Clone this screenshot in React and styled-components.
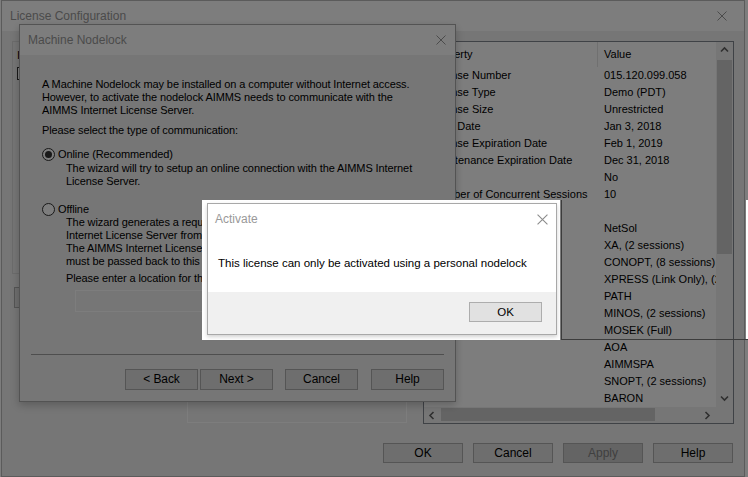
import React from 'react';
import styled, { createGlobalStyle } from 'styled-components';

const GlobalStyle = createGlobalStyle`
  html, body {
    margin: 0;
    padding: 0;
    background: #ffffff;
  }
  body {
    font-family: "Liberation Sans", Arial, sans-serif;
    color: #000;
  }
`;

const Screen = styled.div`
  position: relative;
  width: 748px;
  height: 477px;
  overflow: hidden;
  background: #ffffff;
  display: flex;
`;

/* ---------- License Configuration (main window) ---------- */

const MainWindow = styled.div`
  width: 744px;
  height: 477px;
  margin-left: 1px;
  box-sizing: border-box;
  border: 1px solid #b9b9b9;
  background: #f0f0f0;
  display: flex;
  flex-direction: column;
`;

const TitleBar = styled.div`
  height: ${p => p.h || 30}px;
  flex: none;
  background: #ffffff;
  display: flex;
  align-items: center;
  justify-content: space-between;
  padding-left: ${p => p.pad || 8}px;
  font-size: 12px;
  color: #999999;
`;

const CloseBox = styled.div`
  width: ${p => p.w || 28}px;
  height: 100%;
  display: flex;
  align-items: center;
  justify-content: center;
`;

const Body = styled.div`
  display: grid;
  grid-template-columns: 400px 311px;
  grid-template-rows: 383px;
  column-gap: 11px;
  padding: 10px 10px 0 10px;
`;

const LeftColumn = styled.div`
  display: flex;
  flex-direction: column;
`;

const GroupBox = styled.div`
  height: 233px;
  box-sizing: border-box;
  border: 1px solid #dcdcdc;
  padding: 7px 4px;
  font-size: 11px;
  line-height: 13px;
`;

const CheckRow = styled.div`
  margin-top: 5px;
  display: flex;
  align-items: center;
  gap: 4px;
`;

const CheckBox = styled.span`
  width: 13px;
  height: 13px;
  box-sizing: border-box;
  border: 1px solid #333333;
  background: #ffffff;
`;

const Button = styled.div`
  width: ${p => p.w || 73}px;
  height: ${p => p.h || 21}px;
  margin-left: ${p => p.ml || 0}px;
  margin-top: ${p => p.mt || 0}px;
  box-sizing: border-box;
  flex: none;
  border: 1px solid #adadad;
  background: ${p => (p.disabled ? '#cccccc' : '#e1e1e1')};
  color: ${p => (p.disabled ? '#838383' : '#000000')};
  font-size: ${p => p.fs || 12}px;
  display: flex;
  align-items: center;
  justify-content: center;
`;

const LowerBox = styled.div`
  margin-top: auto;
  margin-left: 175px;
  margin-bottom: 1px;
  width: 220px;
  height: 90px;
  box-sizing: border-box;
  border: 1px solid #ffffff;
`;

const ListView = styled.div`
  box-sizing: border-box;
  border: 1px solid #828790;
  background: #ffffff;
  display: grid;
  grid-template-columns: 292px 17px;
  grid-template-rows: 365px 16px;
  font-size: 11px;
`;

const ListContent = styled.div`
  overflow: hidden;
`;

const Row = styled.div`
  display: flex;
  height: ${p => p.h || 17}px;
  line-height: ${p => p.h || 17}px;
  white-space: nowrap;
`;

const PropCell = styled.div`
  width: 174px;
  flex: none;
  box-sizing: border-box;
  padding-left: 7px;
  overflow: hidden;
  border-right: 1px solid ${p => (p.header ? '#e5e5e5' : 'transparent')};
`;

const ValueCell = styled.div`
  padding-left: 6px;
`;

const VScroll = styled.div`
  grid-row: 1;
  grid-column: 2;
  background: #f0f0f0;
  display: flex;
  flex-direction: column;
`;

const HScroll = styled.div`
  grid-row: 2;
  grid-column: 1;
  background: #f0f0f0;
  display: flex;
`;

const Corner = styled.div`
  grid-row: 2;
  grid-column: 2;
  background: #f0f0f0;
`;

const Arrow = styled.div`
  flex: none;
  width: 17px;
  height: ${p => (p.horizontal ? 16 : 17)}px;
  display: flex;
  align-items: center;
  justify-content: center;
`;

const Thumb = styled.div`
  background: #cdcdcd;
  flex: none;
  ${p =>
    p.horizontal
      ? `width: ${p.size}px; margin: 1px 0 2px;`
      : `height: ${p.size}px; margin: 1px 1px 0;`}
`;

const Track = styled.div`
  flex: 1;
`;

const MainButtons = styled.div`
  display: flex;
  justify-content: flex-end;
  gap: 10px;
  padding: 19px 11px 0 0;
`;

/* ---------- Machine Nodelock dialog ---------- */

const NodelockWindow = styled.div`
  position: absolute;
  left: 19px;
  top: 24px;
  width: 437px;
  height: 378px;
  box-sizing: border-box;
  border: 1px solid #aaaaaa;
  background: #f0f0f0;
  box-shadow: 0 3px 8px rgba(0, 0, 0, 0.22);
  display: flex;
  flex-direction: column;
`;

const DialogBody = styled.div`
  flex: 1;
  display: flex;
  flex-direction: column;
  padding: 23px 0 0 22px;
  font-size: 11px;
  letter-spacing: -0.1px;
  line-height: 13px;
`;

const Para = styled.div`
  margin-top: ${p => p.mt || 0}px;
  margin-left: ${p => p.indent || 0}px;
`;

const RadioRow = styled.div`
  margin-top: ${p => p.mt || 0}px;
  height: 14px;
  display: flex;
  align-items: center;
  gap: 3px;
`;

const Radio = styled.span`
  width: 13px;
  height: 13px;
  box-sizing: border-box;
  border-radius: 50%;
  border: 1px solid #333333;
  background: #ffffff;
  display: flex;
  align-items: center;
  justify-content: center;
  &::after {
    content: '';
    width: 7px;
    height: 7px;
    border-radius: 50%;
    background: ${p => (p.checked ? '#333333' : 'transparent')};
  }
`;

const PathInput = styled.div`
  margin: 5px 0 0 33px;
  width: 345px;
  height: 22px;
  box-sizing: border-box;
  border: 1px solid #ffffff;
`;

const DialogFooter = styled.div`
  margin-top: auto;
  margin-left: -22px;
  padding: 0 11px;
`;

const Separator = styled.div`
  height: 1px;
  background: #a0a0a0;
`;

const WizardButtons = styled.div`
  display: flex;
  justify-content: flex-end;
  padding: 14px 0 11px;
`;

/* ---------- dim + Activate message box ---------- */

const Dim = styled.div`
  position: absolute;
  inset: 0;
  background: rgba(0, 0, 0, 0.51);
  z-index: 2;
`;

const ActivateFrame = styled.div`
  position: absolute;
  left: 202px;
  top: 200px;
  width: 358px;
  height: 140px;
  box-sizing: border-box;
  padding: 3px 3px 5px 5px;
  background: #ffffff;
  z-index: 3;
  display: flex;
`;

const ActivateWindow = styled.div`
  flex: 1;
  box-sizing: border-box;
  border: 1px solid #a8a8a8;
  box-shadow: 0 2px 4px rgba(0, 0, 0, 0.18);
  background: #ffffff;
  display: flex;
  flex-direction: column;
`;

const Message = styled.div`
  flex: 1;
  padding: 22px 0 0 10px;
  font-size: 11.5px;
  line-height: 15px;
  color: #000000;
`;

const MessageFooter = styled.div`
  height: 42px;
  flex: none;
  background: #f0f0f0;
  display: flex;
  justify-content: flex-end;
  align-items: flex-start;
  padding: 10px 14px 0 0;
  box-sizing: border-box;
`;

const EdgeLines = styled.div`
  position: absolute;
  left: 561px;
  top: 200px;
  width: 187px;
  height: 140px;
  box-sizing: border-box;
  border-left: 1px solid #3c3c3c;
  border-bottom: 1px solid #3c3c3c;
  z-index: 3;
  display: flex;
  justify-content: flex-end;
`;

const BrightStrip = styled.div`
  width: 2px;
  height: 139px;
  background: #ffffff;
`;

const CloseIcon = ({ color = '#999999', size = 10 }) => (
  <svg width={size} height={size} viewBox="0 0 10 10">
    <path d="M0.5 0.5 L9.5 9.5 M9.5 0.5 L0.5 9.5" stroke={color} strokeWidth="1" fill="none" />
  </svg>
);

const Chevron = ({ dir }) => {
  const pts = {
    up: '1,5.5 4.5,2 8,5.5',
    down: '1,2.5 4.5,6 8,2.5',
    left: '5.5,1 2,4.5 5.5,8',
    right: '2.5,1 6,4.5 2.5,8',
  }[dir];
  return (
    <svg width="9" height="9" viewBox="0 0 9 9">
      <polyline points={pts} fill="none" stroke="#606060" strokeWidth="1.6" />
    </svg>
  );
};

const rows = [
  ['License Number', '015.120.099.058'],
  ['License Type', 'Demo (PDT)'],
  ['License Size', 'Unrestricted'],
  ['Start Date', 'Jan 3, 2018'],
  ['License Expiration Date', 'Feb 1, 2019'],
  ['Maintenance Expiration Date', 'Dec 31, 2018'],
  ['Trial', 'No'],
  ['Number of Concurrent Sessions', '10'],
  ['Solvers', ''],
  ['', 'NetSol'],
  ['', 'XA, (2 sessions)'],
  ['', 'CONOPT, (8 sessions)'],
  ['', 'XPRESS (Link Only), (2 sessions)'],
  ['', 'PATH'],
  ['', 'MINOS, (2 sessions)'],
  ['', 'MOSEK (Full)'],
  ['', 'AOA'],
  ['', 'AIMMSPA'],
  ['', 'SNOPT, (2 sessions)'],
  ['', 'BARON'],
];

export default function App() {
  return (
    <>
      <GlobalStyle />
      <Screen>
        <MainWindow>
          <TitleBar h={30} pad={8}>
            License Configuration
            <CloseBox w={44}>
              <CloseIcon />
            </CloseBox>
          </TitleBar>
          <Body>
            <LeftColumn>
              <GroupBox>
                Installed licenses
                <CheckRow>
                  <CheckBox />
                  Use this license
                </CheckRow>
              </GroupBox>
              <Button w={80} ml={2} mt={13}>
                Add...
              </Button>
              <LowerBox />
            </LeftColumn>
            <ListView>
              <ListContent>
                <Row h={25}>
                  <PropCell header>Property</PropCell>
                  <ValueCell>Value</ValueCell>
                </Row>
                {rows.map(([prop, value], i) => (
                  <Row key={i}>
                    <PropCell>{prop}</PropCell>
                    <ValueCell>{value}</ValueCell>
                  </Row>
                ))}
              </ListContent>
              <VScroll>
                <Arrow>
                  <Chevron dir="up" />
                </Arrow>
                <Thumb size={194} />
                <Track />
                <Arrow>
                  <Chevron dir="down" />
                </Arrow>
              </VScroll>
              <HScroll>
                <Arrow horizontal>
                  <Chevron dir="left" />
                </Arrow>
                <Thumb horizontal size={214} />
                <Track />
                <Arrow horizontal>
                  <Chevron dir="right" />
                </Arrow>
              </HScroll>
              <Corner />
            </ListView>
          </Body>
          <MainButtons>
            <Button w={80} h={20}>OK</Button>
            <Button w={80} h={20}>Cancel</Button>
            <Button w={80} h={20} disabled>Apply</Button>
            <Button w={80} h={20}>Help</Button>
          </MainButtons>
        </MainWindow>

        <NodelockWindow>
          <TitleBar h={30} pad={8}>
            Machine Nodelock
            <CloseBox w={28}>
              <CloseIcon />
            </CloseBox>
          </TitleBar>
          <DialogBody>
            <Para>
              A Machine Nodelock may be installed on a computer without Internet access.
              <br />
              However, to activate the nodelock AIMMS needs to communicate with the
              <br />
              AIMMS Internet License Server.
            </Para>
            <Para mt={7}>Please select the type of communication:</Para>
            <RadioRow mt={10}>
              <Radio checked />
              Online (Recommended)
            </RadioRow>
            <Para mt={1} indent={24}>
              The wizard will try to setup an online connection with the AIMMS Internet
              <br />
              License Server.
            </Para>
            <RadioRow mt={14}>
              <Radio />
              Offline
            </RadioRow>
            <Para indent={24}>
              The wizard generates a request file that must be sent to the AIMMS
              <br />
              Internet License Server from a computer with Internet access.
              <br />
              The AIMMS Internet License Server returns a response file that
              <br />
              must be passed back to this wizard.
            </Para>
            <Para mt={4} indent={24}>
              Please enter a location for the request file:
            </Para>
            <PathInput />
            <DialogFooter>
              <Separator />
              <WizardButtons>
                <Button>&lt; Back</Button>
                <Button ml={2}>Next &gt;</Button>
                <Button ml={12}>Cancel</Button>
                <Button ml={13}>Help</Button>
              </WizardButtons>
            </DialogFooter>
          </DialogBody>
        </NodelockWindow>

        <Dim />

        <ActivateFrame>
          <ActivateWindow>
            <TitleBar h={30} pad={7}>
              Activate
              <CloseBox w={28}>
                <CloseIcon color="#8c8c8c" size={11} />
              </CloseBox>
            </TitleBar>
            <Message>This license can only be activated using a personal nodelock</Message>
            <MessageFooter>
              <Button h={20} fs={11.5}>OK</Button>
            </MessageFooter>
          </ActivateWindow>
        </ActivateFrame>

        <EdgeLines>
          <BrightStrip />
        </EdgeLines>
      </Screen>
    </>
  );
}
